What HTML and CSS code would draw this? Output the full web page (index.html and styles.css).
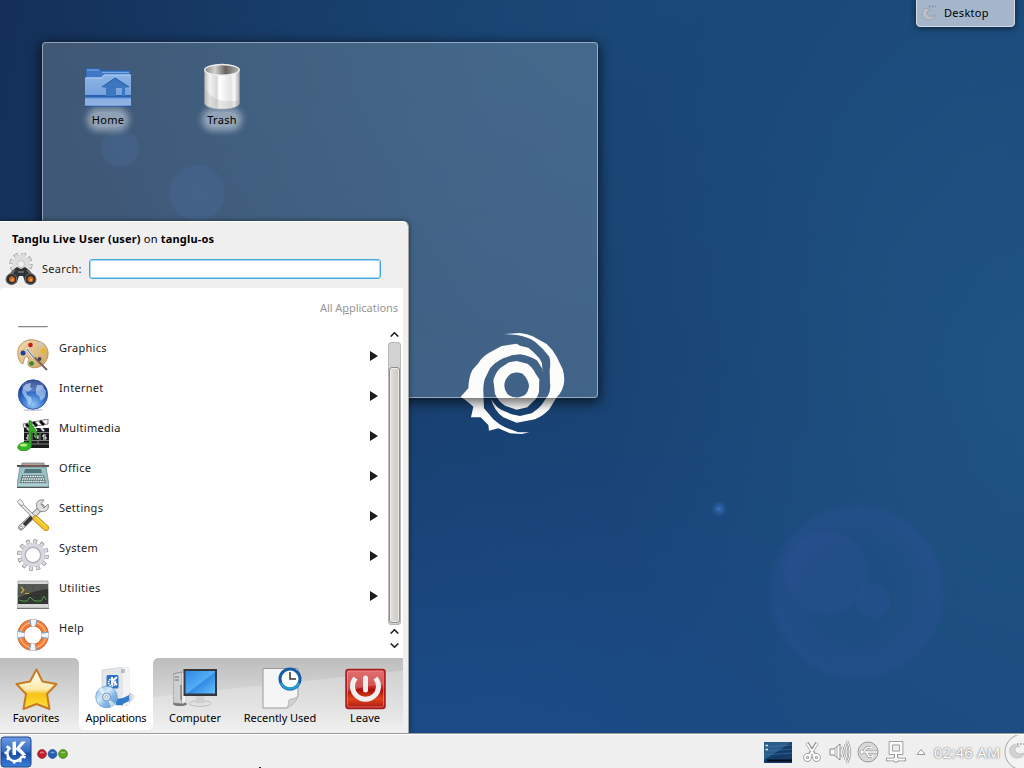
FILE: index.html
```
<!DOCTYPE html>
<html lang="en">
<head>
<meta charset="utf-8">
<title>Desktop</title>
<link rel="stylesheet" href="styles.css">
</head>
<body>
<main class="desktop">
  <svg class="wallpaper" viewBox="0 0 1024 768">
    <defs>
      <radialGradient id="bub"><stop offset="0" stop-color="#31569a" stop-opacity="0"/><stop offset=".5" stop-color="#31569a" stop-opacity=".05"/><stop offset=".91" stop-color="#31529a" stop-opacity=".32"/><stop offset="1" stop-color="#31529a" stop-opacity="0"/></radialGradient>
      <radialGradient id="disc"><stop offset="0" stop-color="#31529a" stop-opacity=".26"/><stop offset=".88" stop-color="#31529a" stop-opacity=".28"/><stop offset="1" stop-color="#31529a" stop-opacity="0"/></radialGradient>
      <radialGradient id="faint"><stop offset="0" stop-color="#245098" stop-opacity=".3"/><stop offset=".9" stop-color="#245098" stop-opacity=".24"/><stop offset="1" stop-color="#245098" stop-opacity="0"/></radialGradient>
      <radialGradient id="spark"><stop offset="0" stop-color="#3d74c8"/><stop offset=".4" stop-color="#3468b4" stop-opacity=".6"/><stop offset="1" stop-color="#3468b4" stop-opacity="0"/></radialGradient>
    </defs>
    <circle cx="857" cy="592" r="90" fill="url(#bub)"/>
    <circle cx="826" cy="573" r="44" fill="url(#disc)"/>
    <circle cx="873" cy="601" r="18" fill="url(#disc)"/>
    <circle cx="719" cy="509" r="8" fill="url(#spark)"/>
    <circle cx="120" cy="148" r="20" fill="url(#faint)"/>
    <circle cx="197" cy="193" r="29" fill="url(#faint)"/>
  </svg>
  <svg class="swirl" viewBox="0 0 540 390" fill="#fff">
    <path d="M192 42L240 39Q262 42 278 49L320 72Q338 88 350 110L368 148Q373 163 373 180Q371 212 350 232L328 268Q310 288 285 298L230 308L190 292Q162 272 153 236Q166 260 185 270L215 283L240 288L275 280Q302 262 308 250L325 225Q333 208 330 190L329 150Q333 128 328 110L308 86L285 65Q262 50 230 45Z"/>
    <path d="M308 162L306 145L292 122Q272 108 240 103L215 106L190 115Q166 126 150 145L134 178Q129 195 130 215L132 265L160 298Q175 312 195 322L235 337L268 337L245 342L210 340L175 325L147 332L145 315L122 292L93 292L100 260Q88 248 62 230L85 205Q86 172 97 150L115 130Q125 112 145 100L185 78L230 71L240 77L265 83L280 96L298 115L306 130Z"/>
    <path fill-rule="evenodd" d="M207 127L230 123L262 131Q280 144 286 160L298 178L297 215Q292 235 280 244L262 262L230 269L195 257Q175 244 165 222L160 180Q167 158 180 145ZM213 161Q193 176 193 197Q195 216 207 226Q220 234 232 234L254 226Q266 214 267 197Q265 178 248 161Q230 154 213 161Z"/>
  </svg>

  <section class="folder-view">
    <figure class="desk-icon">
      <svg class="desk-art" viewBox="0 0 48 48">
        <defs><linearGradient id="fol" x2="0" y2="1"><stop stop-color="#8db4e6"/><stop offset="1" stop-color="#6a99d8"/></linearGradient></defs>
        <path d="M2 5.500H15L17 7.500H46V22H2Z" fill="#3f78c4" stroke="#2a60aa"/>
        <path d="M3 7H15M18 9.500H45" stroke="#7aa9e4"/>
        <path d="M1 14.500H17L20 11.500H47V43.500H1Z" fill="url(#fol)"/>
        <path d="M1.500 15H17.500L20.500 12H46.500" fill="none" stroke="#b0cff3"/>
        <path d="M1 32H47V34.500H1Z" fill="#2763b2"/><path d="M1 36H47V42H1Z" fill="#8db1e4"/><path d="M1 43.500H47" stroke="#1d4e94"/>
        <path d="M18 24L31 15L45 24L41 25V33H38V25H32V33H22V25Z" fill="#3d77bf"/><path d="M18 24L31 15L45 24" fill="none" stroke="#215aa6"/>
      </svg>
      <figcaption class="desk-label">Home</figcaption>
    </figure>
    <figure class="desk-icon">
      <svg class="desk-art" viewBox="0 0 48 48">
        <defs><linearGradient id="can"><stop stop-color="#bcbcbc"/><stop offset=".15" stop-color="#f2f2f2"/><stop offset=".35" stop-color="#d9d8d7"/><stop offset=".42" stop-color="#fff"/><stop offset=".75" stop-color="#e3e3e3"/><stop offset=".85" stop-color="#fafafa"/><stop offset="1" stop-color="#aaa"/></linearGradient>
        <linearGradient id="canin"><stop stop-color="#8b8785"/><stop offset=".3" stop-color="#d3d0cd"/><stop offset=".6" stop-color="#68625f"/><stop offset="1" stop-color="#b8b5b2"/></linearGradient></defs>
        <path d="M6.500 7V40C7 48 41 48 41.500 40V7Z" fill="url(#can)" stroke="#979594" stroke-width=".8"/>
        <path d="M7 25C14 38 28 40 41 37V41C39 46 10 47 7 41Z" fill="#999" opacity=".22"/>
        <ellipse cx="24" cy="6.800" rx="17.300" ry="5.300" fill="url(#canin)" stroke="#eee" stroke-width="1.300"/>
      </svg>
      <figcaption class="desk-label">Trash</figcaption>
    </figure>
  </section>

  <aside class="toolbox">
    <svg class="toolbox-art" viewBox="0 0 16 16"><path d="M4 3C-1 6 1 15 8 15C12 15 14 12 14 10C11 12 6 12 6 8C6 6 8 5 10 6C9 4 6 3 4 3Z" fill="#b9bfc5" stroke="#939ca8" stroke-width=".8"/><path d="M8 1.500H15" stroke="#8794a4" stroke-width="1.500" stroke-dasharray="2 1"/></svg>
    <span>Desktop</span>
  </aside>

  <section class="launcher">
    <header class="launcher-head">
      <p class="who"><b>Tanglu Live User (user)</b> on <b>tanglu-os</b></p>
      <div class="search">
        <svg class="search-art" viewBox="0 0 32 32">
          <circle cx="16" cy="11" r="9.300" fill="none" stroke="#999" stroke-width="4.600" stroke-dasharray="4.300 3"/><circle cx="16" cy="11" r="9.200" fill="none" stroke="#dcdcdc" stroke-width="3.600" stroke-dasharray="3.300 3.925" stroke-dashoffset="-.5"/>
          <circle cx="16" cy="11" r="6" fill="none" stroke="#dedede" stroke-width="5.500"/><circle cx="16" cy="11" r="3.500" fill="#efefef" stroke="#aaa" stroke-width=".6"/>
          <path d="M8 17L12 14L16 16L20 14L24 17L31 25C33 31 24 34 20 29L18 23H14L12 29C8 34 -1 31 1 25Z" fill="#303236"/>
          <path d="M5 22L10 17M27 22L22 17M13 19H19" stroke="#777" stroke-width="1.500"/>
          <circle cx="6.500" cy="26" r="5.300" fill="#292b2e" stroke="#717376"/><circle cx="25.500" cy="26" r="5.300" fill="#292b2e" stroke="#717376"/>
          <circle cx="7" cy="26.300" r="3" fill="#c9661c"/><circle cx="25.500" cy="26.300" r="3" fill="#c9661c"/><circle cx="7.500" cy="27" r="1.200" fill="#f5a850"/><circle cx="26" cy="27" r="1.200" fill="#f5a850"/>
        </svg>
        <label class="search-label" for="q">Search:</label>
        <input class="search-box" id="q" type="text">
      </div>
    </header>

    <div class="pane">
      <div class="crumb">All A<u>p</u>plications</div>
      <div class="browser">
        <div class="apps">
          <svg class="sliver" viewBox="0 0 32 2"><path d="M1 .5H31" stroke="#8a8a8a"/><path d="M2 1.500H30" stroke="#ddd"/></svg>
          <div class="app"><svg class="app-art" viewBox="0 0 32 32">
            <defs><linearGradient id="wood" x2="1" y2="1"><stop stop-color="#f2dcae"/><stop offset="1" stop-color="#cda365"/></linearGradient></defs>
            <path d="M2 8C6 1 14-1 21 2C30 4 33 13 30 20C27 28 17 31 12 27C9 24 13 21 11 18C8 16 7 21 6 25C2 24-1 15 2 8Z" fill="url(#wood)" stroke="#a98451" stroke-width=".8"/>
            <path d="M4 13L14 3M18 26L29 12" stroke="#d9b879"/><path d="M9 10L24 25L30 31" stroke="#73665e" stroke-width="2"/><path d="M9 9L17 19" stroke="#ddd" stroke-width="3"/><path d="M10 10L17 19" stroke="#6a6666" stroke-width="1"/>
            <circle cx="13.500" cy="6" r="2.300" fill="#c31c1c"/><circle cx="23" cy="5" r="2.300" fill="#c7cac7"/><circle cx="6" cy="14" r="2.500" fill="#1b3f9e"/><circle cx="26.500" cy="12" r="2.200" fill="#e0b91b"/><circle cx="14.500" cy="24.500" r="2.300" fill="#2c8a35"/><circle cx="22.500" cy="20" r="2" fill="#444"/>
          </svg><span class="app-name">Graphics</span><i class="chev"></i></div>
          <div class="app"><svg class="app-art" viewBox="0 0 32 32">
            <defs><radialGradient id="globe" cx=".5" cy=".85" r=".8"><stop stop-color="#8ec5f5"/><stop offset=".45" stop-color="#3d78cf"/><stop offset="1" stop-color="#142f83"/></radialGradient></defs>
            <ellipse cx="16" cy="31" rx="10" ry="1" fill="#ccd"/>
            <circle cx="16" cy="15.500" r="14.700" fill="url(#globe)" stroke="#2b529f" stroke-width=".8"/>
            <path d="M6 8L9 5L14 4L13 8L15 10L11 13L9 12L10 16L14 18L15 22L12 27L10 21L7 17L5 13ZM20 6L25 6L29 12L28 18L24 22L22 17L19 15L19 10Z" fill="#bfe0fb" opacity=".6"/>
            <ellipse cx="16" cy="7" rx="11" ry="5.500" fill="#fff" opacity=".2"/>
          </svg><span class="app-name">Internet</span><i class="chev"></i></div>
          <div class="app"><svg class="app-art" viewBox="0 0 32 32">
            <path d="M6 5L31 0V5L7 9Z" fill="#f3f3f3" stroke="#333" stroke-width=".6"/><path d="M9 5L12 8M16 3L20 7M23 2L27 6" stroke="#111" stroke-width="3"/>
            <path d="M7 9H32V29H7Z" fill="#1a1b1c"/><path d="M10 9L13 12M17 9L20 12M24 9L27 12" stroke="#ddd" stroke-width="2"/><path d="M7 13.500H32M7 21.500H32M7 25H32M15 14V21M23 14V21M21 22V25" stroke="#999" stroke-width=".8"/>
            <path d="M10 16H12V18H10V20H12M18 16V18H21M21 16V20M29 16H26V18H29V20H26" fill="none" stroke="#fff"/>
            <path d="M12 28V1.500L14.500 2C14 9 23 11 19 20C19 14 15 12 14.500 13V28Z" fill="#35ad25" stroke="#187d13" stroke-width=".6"/>
            <ellipse cx="7.500" cy="27.500" rx="6.800" ry="4.300" fill="#35b624" stroke="#187d13" stroke-width=".6" transform="rotate(-10 7.500 27.500)"/><ellipse cx="6.500" cy="26" rx="3.500" ry="1.500" fill="#b3f08c"/>
          </svg><span class="app-name">Multimedia</span><i class="chev"></i></div>
          <div class="app"><svg class="app-art" viewBox="0 0 32 32">
            <path d="M5 4H27L28 9H4Z" fill="#aaa6a1" stroke="#737b7c" stroke-width=".7"/><path d="M0 6H32V8H0Z" fill="#555"/><path d="M7 7H25" stroke="#b54c3e"/>
            <path d="M3 8H29L32 26V28H0V26Z" fill="#9cc1c4" stroke="#5b8286" stroke-width=".7"/><path d="M8 10H24L25 14H7Z" fill="#53777d"/><path d="M5 16H27L29 24H3Z" fill="#5a7478"/>
            <path d="M6 17.500H27M5 20H28M4.500 22.500H28" stroke="#edf3f2" stroke-width="1.600" stroke-dasharray="1.600 .7"/><path d="M1 26H31" stroke="#c5dcdc"/><path d="M0 28.500H32" stroke="#555"/>
          </svg><span class="app-name">Office</span><i class="chev"></i></div>
          <div class="app"><svg class="app-art" viewBox="0 0 32 32">
            <path d="M4 28.500L25 8" stroke="#777" stroke-width="5.500" stroke-linecap="round"/><path d="M4 28.500L25 8" stroke="#dedede" stroke-width="4" stroke-linecap="round"/><path d="M7 26L15 18" stroke="#333" stroke-width="3.500"/>
            <path d="M20 9C18 3 22 0 27 1L24 5L27 9L31 5C33 11 28 14 22 12Z" fill="#ddd" stroke="#777" stroke-width=".8"/><circle cx="4" cy="28.500" r="1.300" fill="#fff" stroke="#666" stroke-width=".6"/>
            <path d="M3 4L18 19" stroke="#888" stroke-width="3.400"/><path d="M3 4L18 19" stroke="#f0f0f0" stroke-width="1.800"/><path d="M0 3L3 0L7 5L5 7Z" fill="#eee" stroke="#888" stroke-width=".7"/>
            <path d="M18.500 19.500L29 29" stroke="#b78309" stroke-width="6" stroke-linecap="round"/><path d="M18.500 19.500L29 29" stroke="#f2c52b" stroke-width="4.600" stroke-linecap="round"/><path d="M19 18.500L29 27.500" stroke="#fae583"/>
          </svg><span class="app-name">Settings</span><i class="chev"></i></div>
          <div class="app"><svg class="app-art" viewBox="0 0 32 32">
            <circle cx="16" cy="16" r="13.300" fill="none" stroke="#85858d" stroke-width="5" stroke-dasharray="3.600 3.364"/><circle cx="16" cy="16" r="13" fill="none" stroke="#dcdce2" stroke-width="4.300" stroke-dasharray="2.600 4.207" stroke-dashoffset="-.5"/>
            <circle cx="16" cy="16" r="9.600" fill="none" stroke="#9595a0" stroke-width="5"/><circle cx="16" cy="16" r="9.800" fill="none" stroke="#d9d9e0" stroke-width="4.200"/><circle cx="16" cy="16" r="8" fill="none" stroke="#b5b5c2"/>
          </svg><span class="app-name">System</span><i class="chev"></i></div>
          <div class="app"><svg class="app-art" viewBox="0 0 32 32">
            <path d="M1 2H31L32 29H0Z" fill="#d8d8d8" stroke="#999" stroke-width=".7"/><path d="M1 5H31V25H1Z" fill="#30332f"/><path d="M1 5H31V10C20 11 12 14 1 19Z" fill="#555953"/><path d="M1 15H31M1 19H31M1 23H31M8 6V24M16 6V24M24 6V24" stroke="#464a44" stroke-width=".4"/>
            <path d="M4 8L7 11L4 14M8 14.500H12" fill="none" stroke="#d9ab25" stroke-width="1.100"/><path d="M2 21L6 22L10 22L13 18L16 21L19 22L24 22L27 17L29 21" fill="none" stroke="#4d9c47"/><path d="M0 29.500H32" stroke="#777"/>
          </svg><span class="app-name">Utilities</span><i class="chev"></i></div>
          <div class="app"><svg class="app-art" viewBox="0 0 32 32">
            <circle cx="16" cy="16" r="12.300" fill="none" stroke="#b76336" stroke-width="7"/><circle cx="16" cy="16" r="12.300" fill="none" stroke="#f27a32" stroke-width="5.800"/><circle cx="16" cy="16" r="12.800" fill="none" stroke="#ffb17a" stroke-width="1.500"/>
            <circle cx="16" cy="16" r="12.300" fill="none" stroke="#79a9dc" stroke-width="6.500" stroke-dasharray="7 12.320" stroke-dashoffset="3.500"/><circle cx="16" cy="16" r="12.300" fill="none" stroke="#f4f6fa" stroke-width="6.500" stroke-dasharray="4.600 14.720" stroke-dashoffset="2.300"/>
          </svg><span class="app-name">Help</span></div>
        </div>
        <div class="scroll">
          <svg class="step step-top" viewBox="0 0 9 5"><path d="M.7 4.500L4.500 .8L8.300 4.500"/></svg>
          <div class="track"><div class="thumb"></div></div>
          <svg class="step step-up" viewBox="0 0 9 5"><path d="M.7 4.500L4.500 .8L8.300 4.500"/></svg>
          <svg class="step step-down" viewBox="0 0 9 5"><path d="M.7 .5L4.500 4.200L8.300 .5"/></svg>
        </div>
      </div>
    </div>

    <nav class="tabs">
      <div class="tab tab-fav"><svg class="tab-art" viewBox="0 0 44 44">
        <defs><linearGradient id="gold" x2="0" y2="1"><stop stop-color="#fff"/><stop offset=".5" stop-color="#fbe9a9"/><stop offset=".62" stop-color="#f6c415"/><stop offset="1" stop-color="#ffe13c"/></linearGradient></defs>
        <path d="M22.500 2.500L28.500 14.500L42.500 17L33 27L35.500 42L22.500 37L9.500 42L12 27L2.500 17L16 14.500Z" fill="url(#gold)" stroke="#c77c22" stroke-width="2" stroke-linejoin="round"/>
      </svg><span>Favorites</span></div>
      <div class="tab tab-on"><svg class="tab-art" viewBox="0 0 44 44">
        <defs><linearGradient id="cd" x2="1" y2="1"><stop stop-color="#7eb0e5"/><stop offset=".4" stop-color="#d6eafa"/><stop offset=".6" stop-color="#8abbe8"/><stop offset="1" stop-color="#568fcc"/></linearGradient>
        <linearGradient id="shade"><stop stop-color="#888" stop-opacity=".8"/><stop offset="1" stop-color="#bbb" stop-opacity="0"/></linearGradient></defs>
        <path d="M32 39L43 29L34 25Z" fill="url(#shade)"/>
        <path d="M8 3L29 0L35 1V37L29 39L8 36Z" fill="#e4e7ea" stroke="#c5c8cb" stroke-width=".6"/><path d="M29 0L35 1V37L29 39Z" fill="#f4f4f4"/><path d="M22 32L29 31V38L22 38ZM29 31L35 28V34L29 37Z" fill="#2f7ccb"/><path d="M28 2V6M30 2V6" stroke="#777" stroke-width=".8"/>
        <rect x="12.500" y="8" width="12" height="13.500" rx="1.500" fill="#2e72c8"/><circle cx="18" cy="15.500" r="3.500" fill="none" stroke="#fff" stroke-width="1.600" stroke-dasharray="1.500 .7"/><path d="M18 10V18M23 10L18.500 14L23 18" stroke="#fff" stroke-width="1.800" fill="none"/>
        <circle cx="12.500" cy="30" r="10.800" fill="url(#cd)" stroke="#76a4d4" stroke-width=".8"/><path d="M12.500 30L4 23L8 20ZM12.500 30L17 40L21 37Z" fill="#fff" opacity=".6"/><circle cx="12.500" cy="30" r="4" fill="#dce8f2" stroke="#6d96c4"/><circle cx="12.500" cy="30" r="1.500" fill="#fff" stroke="#888" stroke-width=".6"/>
      </svg><span>Applications</span></div>
      <div class="tab tab-first"><svg class="tab-art" viewBox="0 0 44 44">
        <defs><linearGradient id="scr" x2="1" y2="1"><stop stop-color="#3187e2"/><stop offset=".5" stop-color="#53acf5"/><stop offset=".55" stop-color="#338ce5"/><stop offset="1" stop-color="#64c3fb"/></linearGradient></defs>
        <ellipse cx="7" cy="37" rx="7" ry="2" fill="#777"/><path d="M0 7L9 5V37L0 36Z" fill="#cfcfcf" stroke="#777" stroke-width=".7"/><path d="M9 5L13 7V35L9 37Z" fill="#f3f3f3" stroke="#aaa" stroke-width=".5"/><path d="M1.500 10H6M1.500 13H6" stroke="#777"/><path d="M8 18V33" stroke="#666"/>
        <ellipse cx="27" cy="36.500" rx="11" ry="3" fill="#e0e0e0" stroke="#aaa" stroke-width=".6"/><path d="M23 29H31L32 36H23Z" fill="#d0d0d0"/><path d="M10.500 2H44V29H10.500Z" fill="#34373b"/><path d="M12.500 4H42V26.500H12.500Z" fill="url(#scr)"/>
      </svg><span>Computer</span></div>
      <div class="tab"><svg class="tab-art" viewBox="0 0 44 44">
        <path d="M5 1.500H40V29L29 41H5Z" fill="#f5f5f5" stroke="#9a9a9a"/><path d="M40 29C36 33 32 31 31 33C30 36 31 38 29 41C34 39 38 35 40 29Z" fill="#d0d0d0" stroke="#aaa" stroke-width=".7"/>
        <circle cx="32" cy="12" r="10" fill="#fdfdfd" stroke="#145da8" stroke-width="3"/><path d="M23 16A10 10 0 0 0 41 16" fill="none" stroke="#24a2d6" stroke-width="2.300"/><path d="M32 5V12H38" fill="none" stroke="#333" stroke-width="1.500"/>
      </svg><span>Recently Used</span></div>
      <div class="tab tab-leave"><svg class="tab-art" viewBox="0 0 44 44">
        <defs><linearGradient id="red" x2="0" y2="1"><stop stop-color="#d94d4d"/><stop offset=".45" stop-color="#c92a2a"/><stop offset=".52" stop-color="#a90d0d"/><stop offset=".75" stop-color="#df4417"/><stop offset="1" stop-color="#aa1717"/></linearGradient></defs>
        <rect x="3" y="2.500" width="39" height="39" rx="2.500" fill="url(#red)" stroke="#a51a1d" stroke-width="1.500"/><rect x="4.500" y="4" width="36" height="36" rx="1.500" fill="none" stroke="#ef8080" stroke-width=".7"/>
        <path d="M4 4H40V18C28 18 14 21 4 25Z" fill="#fff" opacity=".2"/>
        <path d="M12.500 11A13 13 0 1 0 32.500 11" fill="none" stroke="#f0eeee" stroke-width="5"/><path d="M22.500 11V23" stroke="#f0eeee" stroke-width="5" stroke-linecap="round"/>
      </svg><span>Leave</span></div>
    </nav>
  </section>

  <footer class="panel">
    <svg class="kmenu" viewBox="0 0 32 32">
      <defs><linearGradient id="kb" x2="0" y2="1"><stop stop-color="#6d9be1"/><stop offset=".48" stop-color="#326bc5"/><stop offset=".55" stop-color="#1a4da8"/><stop offset="1" stop-color="#3b7eda"/></linearGradient></defs>
      <rect x="1" y="1" width="30" height="30" rx="3" fill="url(#kb)" stroke="#1c438e"/>
      <path d="M10.500 11.500A7.500 7.500 0 1 0 22 20" fill="none" stroke="#fff" stroke-width="2.400"/><path d="M9.500 12L6.500 10.500M8 16.500L4.500 17M9.500 21L7 23.500M14.500 24L14 27.500M19 23L21 26M22 20L25.500 21.500" stroke="#fff" stroke-width="2.600"/>
      <path d="M12.500 6L16 5.500V19H12.500Z" fill="#fff"/><path d="M16 12.500L21.500 5.500H26L20 12L26.500 19H22L16 13.500Z" fill="#fff"/>
    </svg>
    <svg class="dots" viewBox="0 0 32 10"><circle cx="5" cy="5" r="4.400" fill="#c3202d" stroke="#851d25" stroke-width=".7"/><circle cx="15.500" cy="5" r="4.400" fill="#225fb5" stroke="#1c4689" stroke-width=".7"/><circle cx="26" cy="5" r="4.400" fill="#5ca51e" stroke="#397610" stroke-width=".7"/><path d="M3 3.500H7M13.500 3.500H17.500M24 3.500H28" stroke="#fff" opacity=".4" stroke-width="1.500"/></svg>
    <i class="mark"></i>
    <div class="tray">
      <svg class="pager" viewBox="0 0 28 21"><path d="M0 0H28V21H0Z" fill="#153b68"/><path d="M0 0H28L0 18Z" fill="#2a5c8c"/><path d="M3 5L28 3M2 9L28 7M1 13L28 11" stroke="#447aa8" stroke-width=".6"/><path d="M3 18.500H28" stroke="#050c18" stroke-width="2"/><path d="M1.500 3.500H4M1.500 7.500H4" stroke="#e3ead2" stroke-width="1.500"/></svg>
      <svg class="t t-cut" viewBox="0 0 18 20"><path d="M4 1L11 12M14 1L7 12" stroke-width="3.400"/><circle cx="4.500" cy="15.500" r="2.500"/><circle cx="13.500" cy="15.500" r="2.500"/><path d="M4 1.500L11.500 13.500M14 1.500L6.500 13.500" class="w"/><circle cx="4.500" cy="15.500" r="2.500" class="w"/><circle cx="13.500" cy="15.500" r="2.500" class="w"/></svg>
      <svg class="t t-vol" viewBox="0 0 24 24"><path d="M2 9H6L12 4V20L6 15H2Z" fill="#fff" stroke="#888" stroke-width="1"/><path d="M7 9V15M9 7V17" stroke="#aaa" stroke-width="1"/><path d="M14 7Q17 12 14 17M17 4Q21 12 17 20M19 1Q25 12 19 23" stroke="#999" stroke-width="2.500"/><path d="M14 7Q17 12 14 17M17 4Q21 12 17 20M19 1Q25 12 19 23" stroke="#fff" stroke-width="1"/></svg>
      <svg class="t t-usb" viewBox="0 0 22 22"><circle cx="11" cy="11" r="10" fill="#d8d8d8" stroke="#999" stroke-width="1"/><path d="M3 11H20M6 11L10 6.500H14M9 11L12 15.500H15" stroke="#999" stroke-width="3"/><path d="M3 11H20M6 11L10 6.500H15M9 11L12 15.500H16" stroke="#fff" stroke-width="1.500"/><circle cx="5" cy="11" r="2" fill="#fff" stroke="#999" stroke-width=".6"/></svg>
      <svg class="t t-net" viewBox="0 0 24 22"><path d="M6.500 2H17.500V12H6.500Z" stroke-width="3.600"/><path d="M12 13V18M2 18.500H22" stroke-width="3.600"/><circle cx="12" cy="18.500" r="3" fill="#888" stroke="none"/><path d="M6.500 2H17.500V12H6.500Z" fill="#eee" stroke="#fff" stroke-width="2"/><path d="M12 13V18M2.800 18.500H21.200" stroke="#fff" stroke-width="2"/><circle cx="12" cy="18.500" r="2.200" fill="#fff" stroke="none"/><path d="M8.500 4H15.500V10H8.500Z" stroke="#999" stroke-width=".9"/></svg>
      <svg class="t t-up" viewBox="0 0 10 8"><path d="M1 6.500L5 1.500L9 6.500Z" fill="#fff" stroke="#999" stroke-width="1"/></svg>
      <time class="clock">02:46 AM</time>
      <svg class="cashew" viewBox="0 0 20 34"><circle cx="19" cy="17" r="18" fill="#f3f3f3" stroke="#a5a5a5"/><path d="M9 10C3 13 5 23 13 23C17 23 20 21 20 18C16 20 11 18 11 15C11 12 13 11 16 12C14 10 11 9 9 10Z" fill="#d2d2d2" stroke="#b5b5b5" stroke-width=".6"/><path d="M13 9H20" stroke="#aaa" stroke-width="1.500" stroke-dasharray="2 1"/></svg>
    </div>
  </footer>
</main>
</body>
</html>
```
FILE: styles.css
```
* { box-sizing: border-box; }
body { margin: 0; font: 11px/16px "Noto Sans", "Open Sans", sans-serif; letter-spacing: .3px; color: #1a1a1a; }
.desktop {
  position: relative; width: 1024px; height: 768px; overflow: hidden;
  background:
    radial-gradient(ellipse 420px 560px at 100% 50%, rgba(32,90,138,.7), rgba(32,90,138,0)),
    radial-gradient(ellipse 620px 480px at 66% 0%, rgba(28,80,128,.5), rgba(28,80,128,0)),
    radial-gradient(ellipse 760px 420px at 45% 100%, rgba(28,78,142,.85), rgba(28,78,142,0)),
    linear-gradient(100deg, #143058 0%, #183f6d 45%, #1b4678 100%);
}
.wallpaper { position: absolute; inset: 0; width: 1024px; height: 768px; }
.swirl { position: absolute; left: 440px; top: 320px; width: 180px; height: 130px; }

.folder-view {
  position: absolute; left: 42px; top: 42px; width: 556px; height: 356px;
  display: flex; align-items: flex-start; gap: 30px; padding: 20px 0 0 23px;
  border: 1px solid rgba(255,255,255,.45); border-radius: 4px;
  background: linear-gradient(rgba(240,243,230,.2), rgba(240,243,235,.19));
  box-shadow: 0 3px 12px 2px rgba(0,0,0,.6);
}
.desk-icon { display: flex; flex-direction: column; align-items: center; width: 84px; margin: 0; }
.desk-art { width: 48px; height: 48px; }
.desk-label {
  margin-top: 1px; padding: 0 1px; line-height: 15px; color: #000; border-radius: 7px;
  background: rgba(225,232,240,.5); box-shadow: 0 0 6px 4px rgba(225,232,240,.5);
}

.toolbox {
  position: absolute; right: 9px; top: -4px; width: 99px; height: 31px;
  display: flex; align-items: center; gap: 7px; padding: 3px 0 0 4px;
  border: 1px solid #d3dbe5; border-radius: 4px; background: #a5b6ca; color: #000;
  box-shadow: 0 1px 6px rgba(0,0,0,.6);
}
.toolbox-art { width: 16px; height: 16px; }

.launcher {
  position: absolute; left: 0; top: 221px; width: 409px; height: 512px;
  display: flex; flex-direction: column; padding-right: 5px;
  border-top: 1px solid #fff; border-right: 1px solid #a5a5a5; border-radius: 0 6px 0 0;
  background: #efefef; box-shadow: 0 0 5px rgba(0,0,0,.5);
}
.launcher-head { height: 66px; padding: 9px 0 0 5px; }
.who { margin: 0 0 0 7px; color: #000; letter-spacing: .19px; }
.search { display: flex; align-items: center; height: 32px; margin-top: 6px; }
.search-art { width: 32px; height: 32px; }
.search-label { width: 47px; margin-left: 5px; }
.search-box {
  width: 292px; height: 20px; padding: 0 4px; font: inherit; outline: 0;
  border: 1px solid #43a9dc; border-radius: 3px; background: #fff; box-shadow: inset 0 0 0 1px #a4daf5;
}
.pane { height: 370px; background: #fff; border-radius: 3px 0 0 0; }
.crumb { height: 38px; padding: 12px 5px 0 0; text-align: right; color: #989694; letter-spacing: -.05px; }
.browser { display: flex; height: 332px; }
.apps { width: 388px; }
.sliver { display: block; width: 32px; height: 2px; margin: 0 0 7px 17px; }
.app { display: flex; align-items: center; height: 40px; padding: 0 10px 0 17px; }
.app-art { width: 32px; height: 32px; flex: none; }
.app-name { flex: 1; margin-left: 10px; padding-bottom: 14px; }
.chev { width: 8px; height: 10px; margin-top: 2px; background: #1c1c1c; clip-path: polygon(0 0, 100% 50%, 0 100%); }
.scroll { width: 13px; display: flex; flex-direction: column; align-items: center; }
.step { width: 9px; height: 5px; fill: none; stroke: #222; stroke-width: 1.6; }
.step-top { margin-top: 6px; }
.step-up { margin-top: 4px; }
.step-down { margin-top: 9px; }
.track {
  width: 13px; height: 283px; margin-top: 5px; padding-top: 24px;
  border: 1px solid #b8b8b8; border-radius: 3px; background: #d3d3d3;
}
.thumb {
  width: 11px; height: 256px; border: 1px solid #8d8d8d; border-radius: 3px;
  background: linear-gradient(90deg, #e3e0dd, #cbc7c3); box-shadow: inset 0 0 0 1px #eeecea;
}
.tabs {
  display: grid; grid-template-columns: 79px 74px 84px 86px 80px; flex: 1; width: 403px;
  background:
    linear-gradient(174deg, rgba(255,255,255,0) 38%, rgba(255,255,255,.22) 39%, rgba(255,255,255,0) 90%) right / 250px 100% no-repeat,
    linear-gradient(#bdbdbd, #efefef 95%);
  background-color: #fff; color: #000; letter-spacing: -.03px;
}
.tab { display: flex; flex-direction: column; align-items: center; padding-top: 9px; white-space: nowrap; }
.tab-art { width: 44px; height: 44px; margin-bottom: -1px; }
.tab-fav { padding-right: 7px; background: radial-gradient(circle at 0 100%, rgba(255,255,255,0) 4.5px, #fff 5px) 100% 0 / 5px 5px no-repeat; }
.tab-first { background: radial-gradient(circle at 100% 100%, rgba(255,255,255,0) 4.5px, #fff 5px) 0 0 / 5px 5px no-repeat; }
.tab-leave { padding-left: 4px; }
.tab-on { height: 72px; background: #fff; border-radius: 0 0 5px 5px; letter-spacing: -.2px; }

.panel {
  position: absolute; left: 0; top: 733px; width: 1024px; height: 35px;
  display: flex; align-items: center; border-top: 1px solid #999; background: #efefef; box-shadow: inset 0 1px #fff;
}
.kmenu { width: 32px; height: 32px; margin-top: 2px; }
.dots { width: 32px; height: 10px; margin: 5px 0 0 5px; }
.mark { width: 2px; height: 1px; margin: 33px 0 0 190px; background: #222; }
.tray { display: flex; align-items: center; margin-left: auto; padding-top: 2px; }
.pager { width: 28px; height: 21px; margin-right: 11px; }
.t { fill: none; stroke: #888; stroke-width: 3.4; }
.t .w { stroke: #fff; stroke-width: 1.8; }
.t-cut { width: 18px; height: 20px; }
.t-vol { width: 24px; height: 24px; margin-left: 7px; }
.t-usb { width: 22px; height: 22px; margin-left: 5px; }
.t-net { width: 24px; height: 22px; margin-left: 5px; }
.t-up { width: 10px; height: 8px; margin-left: 8px; }
.clock {
  width: 70px; margin-left: 8px; font-size: 14.5px; line-height: 20px; white-space: nowrap; color: #fff; letter-spacing: .4px;
  text-shadow: 0 0 1px #999, 0 0 1px #999, 0 0 2px #aaa, 0 0 3px #bbb;
}
.cashew { width: 20px; height: 34px; }
```
